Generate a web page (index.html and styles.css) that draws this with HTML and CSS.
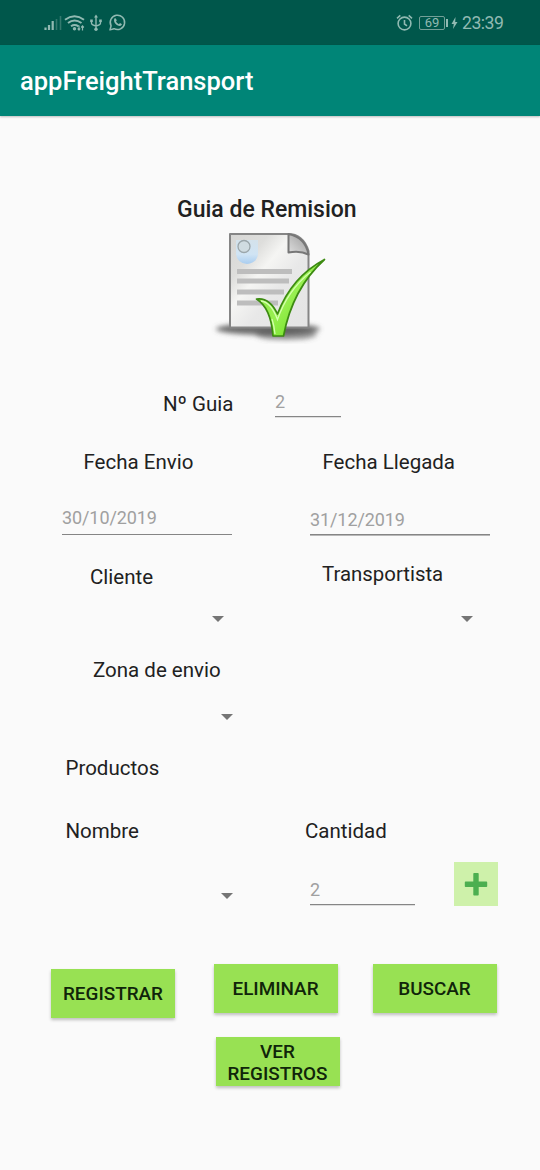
FILE: index.html
```html
<!DOCTYPE html>
<html lang="es">
<head>
<meta charset="utf-8">
<title>appFreightTransport</title>
<link rel="stylesheet" href="styles.css">
</head>
<body>
<div class="screen">
  <header class="status-bar">
    <svg class="status-icons" width="86" height="20" viewBox="0 0 86 20" fill="none" stroke="#91bab2">
      <path d="M2.500 17v-2.500M6 17v-5M9.700 17V8" stroke-width="2.200"/>
      <path d="M13.500 17V6M17.500 17V3" stroke-width="1.600" opacity=".35"/>
      <path d="M22 6.700Q31.500-.3 41 6.700M25 10Q31.500 5 38.500 10M28 13.300Q31.500 10.800 35.500 13.300" stroke-width="2"/>
      <circle cx="31.500" cy="15.800" r="1.700" fill="#91bab2" stroke="none"/>
      <path d="M36 12.500v4.500M34.700 15.500l1.300 1.500 1.200-1.500M39.500 17.500V13M38.200 14.500l1.300-1.500 1.300 1.500" stroke-width="1.200"/>
      <path d="M53 3v13M48.500 8v2q0 2 4.500 3M57.500 8v2q0 2-4.500 3" stroke-width="1.400"/>
      <path d="M51 4.500l2-3 2 3zM47.200 6.500h2.600v2.600h-2.600zM56.200 6.500h2.600v2.600h-2.600z" fill="#91bab2" stroke="none"/>
      <circle cx="53" cy="16.300" r="1.700" fill="#91bab2" stroke="none"/>
      <path d="M67 16.900l1.100-4.100a7.200 7.200 0 1 1 2.900 2.900z" stroke-width="1.500" stroke-linejoin="round"/>
      <path d="M71.300 5.800c.7-.8 1.500-.6 1.800.1l.6 1.400c.1.400-.5 1-.7 1.300.6 1.200 1.500 2 2.800 2.600l1-1c.7-.2 1.600.5 2 .9.300.8-.9 2-1.900 2-3.600-.2-6.900-3.900-5.600-7.300z" fill="#91bab2" stroke="none"/>
    </svg>
    <div class="status-right">
      <svg width="17" height="18" viewBox="0 0 17 18" fill="none" stroke="#91bab2" stroke-width="1.600">
        <circle cx="8.500" cy="9.500" r="6.400"/><path d="M8.500 6v4l2.500 1.800M1 4.300l3.300-2.900M16 4.300l-3.300-2.900"/>
      </svg>
      <span class="battery">69</span><span class="battery-tip"></span>
      <svg class="bolt" width="7" height="12" viewBox="0 0 7 12"><path d="M4.500 0L.5 7h2.300L2 12l4.500-7H4.200z" fill="#91bab2"/></svg>
      <span class="clock">23:39</span>
    </div>
  </header>
  <div class="app-bar">appFreightTransport</div>

  <main class="form">
    <h1 class="title">Guia de Remision</h1>
    <svg class="document" width="120" height="116" viewBox="210 228 120 116">
      <defs>
        <linearGradient id="paper" x1="0" y1="0" x2="1" y2="1">
          <stop offset="0" stop-color="#d6d6d4"/><stop offset=".25" stop-color="#dededc"/><stop offset=".4" stop-color="#f5f5f3"/><stop offset=".6" stop-color="#e8e8e8"/><stop offset="1" stop-color="#e4e4e4"/>
        </linearGradient>
        <linearGradient id="seal" x1="0" y1="0" x2="0" y2="1"><stop offset="0" stop-color="#d4e2eb"/><stop offset=".6" stop-color="#d0e4f4"/><stop offset="1" stop-color="#a9cdf0"/></linearGradient>
        <linearGradient id="fold" x1="0" y1="1" x2="1" y2="0"><stop offset="0" stop-color="#e0e0e0"/><stop offset="1" stop-color="#999"/></linearGradient>
        <linearGradient id="tick" x1="0" y1="0" x2="1" y2="1"><stop offset="0" stop-color="#85e83b"/><stop offset=".5" stop-color="#98ef50"/><stop offset="1" stop-color="#5edb10"/></linearGradient>
        <filter id="soft" x="-20%" y="-80%" width="140%" height="260%"><feGaussianBlur stdDeviation="2.600"/></filter>
      </defs>
      <g filter="url(#soft)" fill="#555"><ellipse cx="268" cy="329" rx="52" ry="6" opacity=".85"/><ellipse cx="286" cy="334.500" rx="31" ry="5.500" opacity=".6"/></g>
      <path d="M230 234H288q15 0 20.500 17v76.500H230z" fill="url(#paper)" stroke="#858585" stroke-width="2" stroke-linejoin="round"/>
      <path d="M236 240h22v14q-1 9-11 10-10-1-11-10z" fill="url(#seal)"/>
      <circle cx="244" cy="246.500" r="6" fill="#d0dce1" stroke="#9ba6aa" stroke-width="1.300"/>
      <path d="M237 269h55v5h-55zM237 278.500h52v5h-52zM237 289.500h47v5h-47zM237 300.500h41v5h-41z" fill="#bdbdbd"/>
      <path d="M288.500 234v18.500q12-2 20 2-3-17-20-20.500z" fill="url(#fold)" stroke="#777" stroke-width="2" stroke-linejoin="round"/>
      <path d="M256.500 299q13-2 21 15 14-37 47-54.500-32 29-41 76.500h-10.500q-2-28-16.500-37z" fill="url(#tick)" stroke="#3d8b12" stroke-width="1.700" stroke-linejoin="round"/>
      <path d="M261 301q10 1 16.500 18.500 10-29 33-47.500M275 334q-1-9-3-15" fill="none" stroke="#d5ffb0" stroke-width="1.300"/>
    </svg>

    <div class="row guide">
      <label class="label guide-label">Nº Guia</label><div class="input guide-input">2</div>
    </div>
    <div class="row date-labels">
      <label class="label sent-label">Fecha Envio</label><label class="label arrival-label">Fecha Llegada</label>
    </div>
    <div class="row dates">
      <div class="input sent-input">30/10/2019</div><div class="input arrival-input">31/12/2019</div>
    </div>
    <div class="row parties">
      <label class="label client-label">Cliente</label><label class="label carrier-label">Transportista</label>
    </div>
    <div class="row party-spinners"><i class="caret"></i><i class="caret"></i></div>
    <div class="row zone"><label class="label zone-label">Zona de envio</label></div>
    <div class="row zone-spinner"><i class="caret"></i></div>
    <div class="row products"><span class="label">Productos</span></div>
    <div class="row product-labels">
      <label class="label name-label">Nombre</label><label class="label quantity-label">Cantidad</label>
    </div>
    <div class="row product-fields">
      <i class="caret"></i><div class="input quantity-input">2</div>
      <button class="add" aria-label="Agregar"><svg width="24" height="24" viewBox="0 0 24 24"><path d="M10.100.900h3.800q.8 0 .8.800v7.900h7.700q.8 0 .8.800v3.800q0 .8-.8.800h-7.700v7.700q0 .8-.8.800h-3.800q-.8 0-.8-.8V15H1.600q-.8 0-.8-.8v-3.800q0-.8.8-.8h7.700V1.700q0-.8.8-.8z" fill="#4caf50"/></svg></button>
    </div>
    <div class="row actions">
      <button class="action register">REGISTRAR</button><button class="action">ELIMINAR</button><button class="action">BUSCAR</button>
    </div>
    <div class="row more"><button class="action view-records">VER<br>REGISTROS</button></div>
  </main>
</div>
</body>
</html>
```
FILE: styles.css
```css
* { box-sizing: border-box; }
body { margin: 0; background: #fafafa; font-family: Roboto, sans-serif; color: #212121; }
.screen { width: 540px; height: 1170px; overflow: hidden; background: #fafafa; }
.status-bar { height: 45px; padding: 13px 35px 0 43px; background: #00574b; display: flex; justify-content: space-between; align-items: flex-start; color: #91bab2; }
.status-right { display: flex; align-items: center; height: 20px; }
.battery { width: 26px; height: 14px; margin-left: 6px; border: 1px solid #729f97; border-radius: 2px; font-size: 13px; line-height: 12px; text-align: center; }
.battery-tip { width: 2px; height: 8px; margin-left: 1px; background: #91bab2; }
.bolt { margin: 0 4px 0 3px; }
.clock { font-size: 17.600px; line-height: 21px; width: 43px; white-space: nowrap; letter-spacing: -.5px; }
.app-bar { height: 71px; padding-left: 20px; background: #008577; color: #fff; font-size: 25.500px; font-weight: 500; line-height: 73px; box-shadow: 0 1px 2px rgba(0,0,0,.25); }
.form { display: flex; flex-direction: column; }
.title { margin: 80px 0 0 177px; font-size: 23px; font-weight: 500; line-height: 28px; }
.document { margin: 4px 0 0 209.500px; }
.row { display: flex; align-items: flex-start; }
.label { font-size: 20.500px; line-height: 24px; white-space: nowrap; }
.input { border-bottom: 1px solid #858585; box-shadow: 0 1px 0 #d8d8d8; font-size: 18px; line-height: 22px; letter-spacing: -.1px; color: #a0a0a0; white-space: nowrap; }
.guide { margin-top: 47px; padding-left: 163px; height: 59px; }
.guide-label { width: 112px; margin-top: 1px; }
.guide-input { width: 66px; height: 26px; box-shadow: 0 -1px 0 #d0d0d0; }
.date-labels { padding-left: 83.500px; height: 57px; }
.sent-label { width: 239px; }
.dates { padding-left: 62px; gap: 78px; height: 55px; }
.sent-input { width: 170px; height: 28px; box-shadow: none; }
.arrival-input { width: 180px; height: 28px; padding-top: 2px; box-shadow: 0 1px 0 #b8b8b8; }
.parties { padding-left: 90px; height: 54px; }
.client-label { width: 232px; margin-top: 3px; }
.carrier-label { font-size: 20.400px; }
.caret { width: 0; height: 0; border: 6px solid transparent; border-top-color: #757575; border-bottom: 0; }
.party-spinners { padding-left: 212px; gap: 237px; height: 42px; }
.zone { padding-left: 93px; height: 56px; }
.zone-spinner { padding-left: 221px; height: 42px; }
.products { padding-left: 65.500px; height: 63px; }
.product-labels { padding-left: 65.500px; height: 43px; }
.name-label { width: 239.500px; }
.product-fields { padding-left: 221px; height: 102px; }
.product-fields .caret { margin-top: 31px; }
.quantity-input { width: 105px; height: 26px; margin: 17px 0 0 77px; box-shadow: 0 -1px 0 #d0d0d0; }
.guide-input, .quantity-input { clip-path: none; }
.guide-input, .quantity-input { box-shadow: 0 1px 0 #dedede; }
.add { width: 44px; height: 44px; margin-left: 39px; border: 0; padding: 0; background: #cef1aa; display: flex; align-items: center; justify-content: center; }
.actions { padding-left: 51px; gap: 35px; height: 73px; }
.action { width: 124px; height: 49px; padding: 0 1px 0 0; border: 0; background: #98e153; font: 500 18.900px/22px Roboto, sans-serif; color: #10250a; box-shadow: 0 2px 3px rgba(0,0,0,.24); }
.register { margin: 5px 4px 0 0; padding-right: 0; }
.more { padding-left: 216px; }
.view-records { padding-top: 2px; }
```
